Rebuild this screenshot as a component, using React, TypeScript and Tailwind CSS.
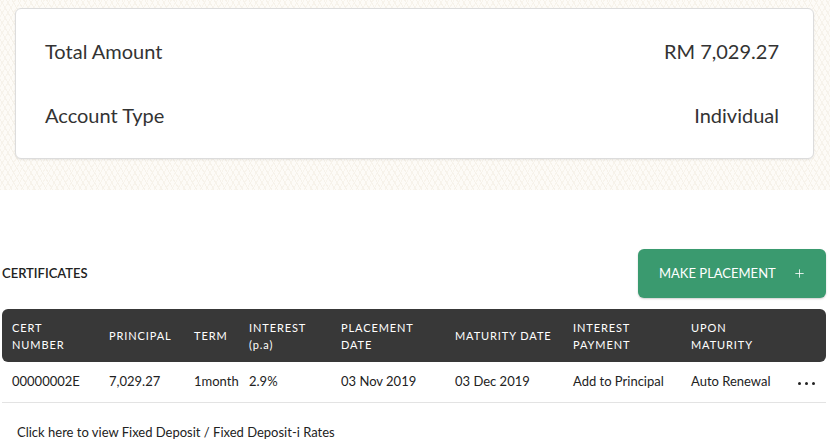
import { Plus } from 'lucide-react'

export default function App() {
  const columns = [
    { id: 'cert', label: ['CERT', 'NUMBER'], w: 'w-[97px]' },
    { id: 'principal', label: ['PRINCIPAL'], w: 'w-[85px]' },
    { id: 'term', label: ['TERM'], w: 'w-[55px]' },
    { id: 'interest', label: ['INTEREST', '(p.a)'], w: 'w-[92px]' },
    { id: 'placement', label: ['PLACEMENT', 'DATE'], w: 'w-[114px]' },
    { id: 'maturity', label: ['MATURITY DATE'], w: 'w-[118px]' },
    { id: 'payment', label: ['INTEREST', 'PAYMENT'], w: 'w-[118px]' },
    { id: 'upon', label: ['UPON', 'MATURITY'], w: 'w-[100px]' }
  ]

  const certificates = [
    {
      cert: '00000002E',
      principal: '7,029.27',
      term: '1month',
      interest: '2.9%',
      placement: '03 Nov 2019',
      maturity: '03 Dec 2019',
      payment: 'Add to Principal',
      upon: 'Auto Renewal'
    }
  ]

  return (
    <div className="w-[830px] h-[444px] overflow-hidden bg-white text-[#333] font-['Lato','Liberation_Sans',sans-serif]">
      {/* Summary */}
      <div className="h-[190px] pt-2 px-[15px] bg-[#fdfbf7] bg-[repeating-linear-gradient(60deg,#f6f2ea_0_1px,transparent_1px_5px),repeating-linear-gradient(-60deg,#f8f4ec_0_1px,transparent_1px_5px)]">
        <div className="w-[799px] h-[151px] bg-white rounded-md border border-[#dcdcdc] shadow-[0_1px_2px_rgba(0,0,0,0.08)] pl-[29px] pr-[34px] pb-[2px] flex flex-col justify-center gap-[38px] text-[20px] text-[#333]">
          <div className="flex justify-between items-center leading-[26px]">
            <span>Total Amount</span>
            <span>RM 7,029.27</span>
          </div>
          <div className="flex justify-between items-center leading-[26px]">
            <span>Account Type</span>
            <span>Individual</span>
          </div>
        </div>
      </div>

      {/* Certificates */}
      <div className="pl-[2px] pr-1 pt-[59px]">
        <div className="flex items-center justify-between">
          <h2 className="text-[13px] font-semibold text-[#222]">CERTIFICATES</h2>
          <button className="w-[188px] h-[49px] bg-[#3a9a6f] rounded-md text-white flex items-center pl-[21px] pr-5 justify-between text-[13px] shadow-[0_1px_2px_rgba(0,0,0,0.2)]">
            <span>MAKE PLACEMENT</span>
            <Plus size={13} strokeWidth={1.5} />
          </button>
        </div>

        <div className="mt-[11px] h-[53px] bg-[#383838] rounded-md flex items-center pl-[10px] text-white text-[11px] tracking-[0.9px] leading-[17px]">
          {columns.map((col) => (
            <div key={col.id} className={col.w}>
              {col.label.map((l) => (
                <div key={l}>{l}</div>
              ))}
            </div>
          ))}
        </div>

        {certificates.map((c) => (
          <div key={c.cert} className="h-[41px] flex items-center pl-[10px] border-b border-[#e3e3e3] text-[13px] text-[#222]">
            <div className="w-[97px]">{c.cert}</div>
            <div className="w-[85px]">{c.principal}</div>
            <div className="w-[55px]">{c.term}</div>
            <div className="w-[92px]">{c.interest}</div>
            <div className="w-[114px]">{c.placement}</div>
            <div className="w-[118px]">{c.maturity}</div>
            <div className="w-[118px]">{c.payment}</div>
            <div className="w-[107px]">{c.upon}</div>
            <div className="flex gap-1 pt-[2px]">
              <span className="w-[3px] h-[3px] rounded-full bg-[#222]" />
              <span className="w-[3px] h-[3px] rounded-full bg-[#222]" />
              <span className="w-[3px] h-[3px] rounded-full bg-[#222]" />
            </div>
          </div>
        ))}

        <p className="pl-[15px] mt-[20px] text-[13px] text-[#222]">Click here to view Fixed Deposit / Fixed Deposit-i Rates</p>
      </div>
    </div>
  )
}
